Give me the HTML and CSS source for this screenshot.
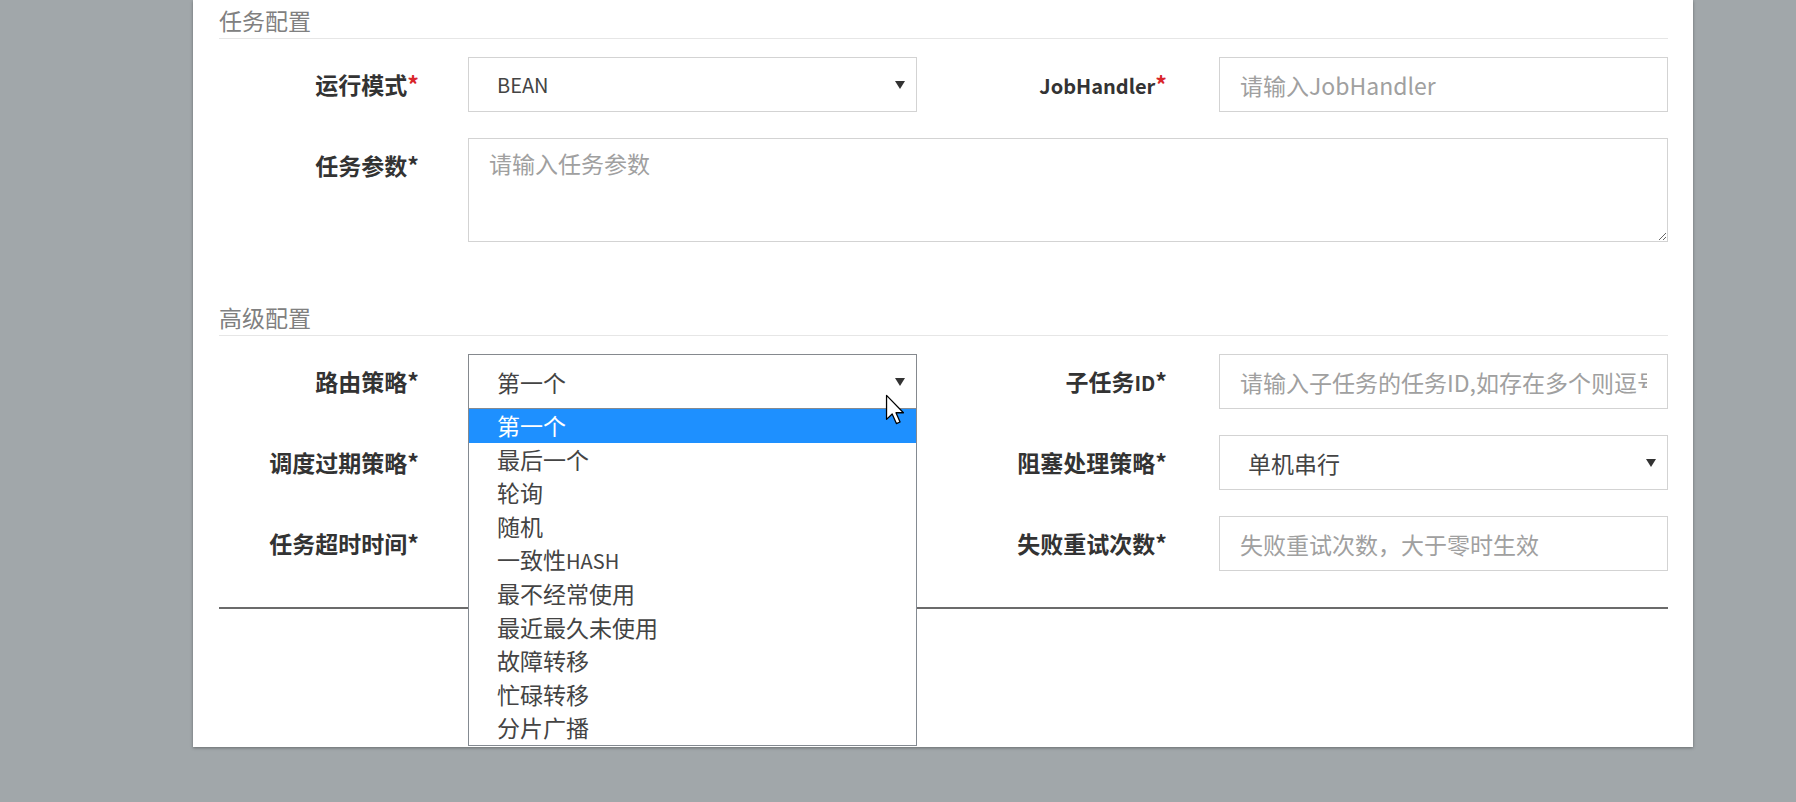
FILE: index.html
```html
<!DOCTYPE html>
<html lang="zh-CN">
<head>
<meta charset="utf-8">
<title>任务配置</title>
<link rel="stylesheet" href="styles.css">
</head>
<body>
<div class="backdrop">
  <div class="modal">
    <form class="form">
      <h3 class="section-title">任务配置</h3>
      <div class="grid">
        <label class="lbl">运行模式<span class="req">*</span></label>
        <div class="select"><span class="select-text en">BEAN</span><svg class="caret" width="10" height="8" viewBox="0 0 10 8"><path d="M0 0H10L5 8Z" fill="#333"/></svg></div>
        <label class="lbl"><span class="en">JobHandler</span><span class="req">*</span></label>
        <input class="input" type="text" placeholder="请输入JobHandler">

        <label class="lbl">任务参数*</label>
        <textarea class="textarea" placeholder="请输入任务参数"></textarea>
      </div>

      <h3 class="section-title section-2">高级配置</h3>
      <div class="grid">
        <label class="lbl">路由策略*</label>
        <div class="select-wrap">
          <div class="select focused"><span class="select-text">第一个</span><svg class="caret" width="10" height="8" viewBox="0 0 10 8"><path d="M0 0H10L5 8Z" fill="#333"/></svg></div>
          <ul class="dropdown">
            <li class="opt active">第一个</li>
            <li class="opt">最后一个</li>
            <li class="opt">轮询</li>
            <li class="opt">随机</li>
            <li class="opt">一致性<span class="en">HASH</span></li>
            <li class="opt">最不经常使用</li>
            <li class="opt">最近最久未使用</li>
            <li class="opt">故障转移</li>
            <li class="opt">忙碌转移</li>
            <li class="opt">分片广播</li>
          </ul>
          <svg class="cursor" width="20" height="31" viewBox="0 0 14 22"><path d="M1 1V18L5 14.2L8 21L10.6 19.9L7.7 13.3H13Z" fill="#fff" stroke="#000" stroke-width="0.9" stroke-linejoin="round"/></svg>
        </div>
        <label class="lbl">子任务<span class="en">ID</span>*</label>
        <input class="input" type="text" placeholder="请输入子任务的任务ID,如存在多个则逗号分隔">

        <label class="lbl">调度过期策略*</label>
        <div class="select"><span class="select-text"></span><svg class="caret" width="10" height="8" viewBox="0 0 10 8"><path d="M0 0H10L5 8Z" fill="#333"/></svg></div>
        <label class="lbl">阻塞处理策略*</label>
        <div class="select"><span class="select-text">单机串行</span><svg class="caret" width="10" height="8" viewBox="0 0 10 8"><path d="M0 0H10L5 8Z" fill="#333"/></svg></div>

        <label class="lbl">任务超时时间*</label>
        <input class="input" type="text">
        <label class="lbl">失败重试次数*</label>
        <input class="input" type="text" placeholder="失败重试次数，大于零时生效">
      </div>
      <hr class="divider">
    </form>
  </div>
</div>
</body>
</html>
```

FILE: styles.css
```css
* { box-sizing: border-box; }

html, body {
  margin: 0;
  padding: 0;
  height: 100%;
  overflow: hidden;
}

body {
  background: #a1a7aa;
  font-family: "Noto Sans CJK SC", "Noto Sans", sans-serif;
  color: #333;
}

.backdrop {
  padding-left: 193px;
}

.modal {
  width: 1500px;
  height: 747px;
  background: #fff;
  padding: 6px 25px 0 26px;
  box-shadow: 0 1px 3px rgba(0, 0, 0, 0.35);
}

.form {
  margin: 0;
}

.en {
  font-size: 0.87em;
}

.section-title {
  margin: 0;
  padding-bottom: 4px;
  font-size: 23px;
  line-height: 28px;
  font-weight: 400;
  color: #808080;
  border-bottom: 1px solid #e6e6e6;
}

.section-2 {
  margin-top: 61px;
}

.grid {
  display: grid;
  grid-template-columns: 249px 449px 302px 449px;
  grid-auto-rows: auto;
  row-gap: 26px;
  margin-top: 18px;
}

.lbl {
  align-self: start;
  text-align: right;
  font-weight: 700;
  font-size: 23px;
  line-height: 55px;
  height: 55px;
  color: #333;
  padding-right: 49px;
  white-space: nowrap;
}

.grid > .lbl:nth-child(4n+3) {
  padding-right: 52px;
}

.req {
  color: #d9262b;
}

.input,
.select,
.textarea {
  display: block;
  width: 100%;
  height: 55px;
  border: 1px solid #d3d3d3;
  border-radius: 0;
  background: #fff;
  font-family: "Noto Sans CJK SC", "Noto Sans", sans-serif;
  font-size: 23px;
  color: #555;
  margin: 0;
  outline: none;
}

.input {
  padding: 0 20px;
}

.input::placeholder,
.textarea::placeholder {
  color: #a0a0a0;
  opacity: 1;
}

.textarea {
  grid-column: 2 / 5;
  height: 104px;
  padding: 9px 20px;
  line-height: 30px;
  resize: vertical;
}

.select {
  position: relative;
  display: flex;
  align-items: center;
  padding: 0 28px;
}

.select-text {
  line-height: 30px;
  color: #444;
}

.caret {
  position: absolute;
  right: 11px;
  top: 23px;
}

.select.focused {
  border-color: #85898e;
}

.select-wrap {
  position: relative;
}

.dropdown {
  position: absolute;
  left: 0;
  top: 54px;
  width: 100%;
  margin: 0;
  padding: 0;
  list-style: none;
  background: #fff;
  border: 1px solid #848a91;
  z-index: 10;
}

.opt {
  height: 33.6px;
  line-height: 33.6px;
  padding-left: 28px;
  font-size: 23px;
  color: #444;
}

.opt.active {
  background: #1e90ff;
  color: #fff;
}

.cursor {
  position: absolute;
  left: 417px;
  top: 40px;
  z-index: 20;
}

.divider {
  margin: 36px 0 0 0;
  border: 0;
  height: 2px;
  background: #6b6b6b;
}
```
